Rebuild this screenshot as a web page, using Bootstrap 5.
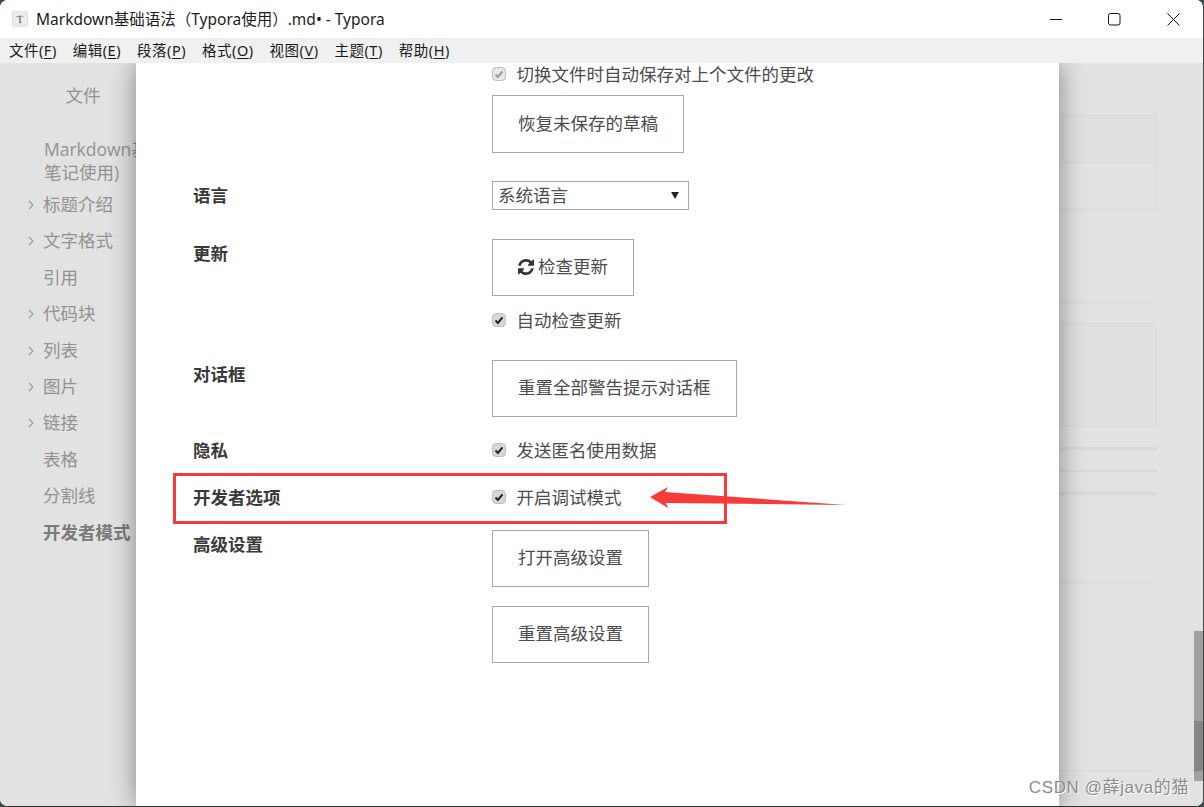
<!DOCTYPE html>
<html lang="zh">
<head>
<meta charset="utf-8">
<title>Typora</title>
<link href="https://cdn.jsdelivr.net/npm/bootstrap@5.3.0/dist/css/bootstrap.min.css" rel="stylesheet">
<style>
html,body{height:807px;overflow:hidden;background:#3c4a4e;}
body{font-family:"Open Sans","Noto Sans CJK SC",sans-serif;}
.win{width:1204px;height:807px;background:#fff;border-radius:8px;overflow:hidden;border-right:1px solid #444;border-bottom:1px solid #333;position:relative;}
.titlebar{height:38px;background:#fff;color:#1c1c1c;font-size:15.5px;font-family:"Noto Sans","Noto Sans CJK SC",sans-serif;padding-left:12px;}
.titletext{padding-top:1px;margin-left:-1px;}
.appicon{width:16px;height:16px;background:#ececec;border:1px solid #e0e0e0;border-radius:2px;font:11px/14px "Liberation Serif",serif;color:#555;text-align:center;margin-right:9px;transform:rotate(-3deg);flex:none;}
.winctl{margin-left:auto;gap:46px;padding-right:23px;}
.winctl svg{display:block;}
.menubar{height:25px;background:#f0f0f0;font-size:14.5px;letter-spacing:.5px;color:#1a1a1a;padding-left:9px;gap:16px;line-height:25px;font-family:"Noto Sans","Noto Sans CJK SC",sans-serif;}
.menubar u{text-underline-offset:2px;}
.workspace{height:743px;background:#e2e2e2;overflow:hidden;position:relative;}
.side{width:136px;flex:none;color:#929292;font-size:17.5px;white-space:nowrap;overflow:hidden;}
.side-title{width:136px;padding-left:30px;text-align:center;height:24px;line-height:24px;margin-top:20px;}
.side-item{height:36.4px;line-height:36.4px;padding-left:43px;position:relative;}
.side-item.wrap{height:auto;line-height:23px;padding-left:44px;margin-top:31px;padding-bottom:2px;}
.side-item svg{position:absolute;left:28px;top:14px;}
.side-item.on{font-weight:700;color:#7a7a7a;}
.dialog{width:923px;flex:none;background:#fff;box-shadow:0 0 24px rgba(0,0,0,.42);position:relative;z-index:2;color:#4d4d4d;font-size:17.5px;padding-left:57px;}
.setrow{display:flex;}
.setlabel{width:299px;flex:none;font-weight:700;color:#3a3a3a;line-height:24px;}
.setbody{flex:1;}
.plainbtn{display:block;background:#fff;border:1px solid #a8a8a8;border-radius:0;color:#4d4d4d;font-size:17.5px;height:58px;padding:0 25px 3px;line-height:24px;}
.plainbtn svg{vertical-align:-2px;margin-right:4px;}
.chk{display:flex;align-items:center;height:24px;line-height:24px;margin:0;}
.chk input{width:14px;height:14px;margin:0 10.5px 0 0;border:1px solid #bbb;border-radius:2px;flex:none;background-size:12px;opacity:1;}
.chk input:checked{background-color:#d8d8d8;border-color:#bbb;background-image:url("data:image/svg+xml,%3Csvg xmlns='http://www.w3.org/2000/svg' viewBox='0 0 12 12'%3E%3Cpath d='M2.5 6.5l2.4 2.4 4.6-5.6' fill='none' stroke='%23222' stroke-width='2'/%3E%3C/svg%3E");}
.chk input:disabled{opacity:1;}
.chk.off input:checked{background-color:#e8e8e8;background-image:url("data:image/svg+xml,%3Csvg xmlns='http://www.w3.org/2000/svg' viewBox='0 0 12 12'%3E%3Cpath d='M2.5 6.5l2.4 2.4 4.6-5.6' fill='none' stroke='%23999' stroke-width='2'/%3E%3C/svg%3E");}
.chk label{color:#4d4d4d;}
.langsel{width:197px;height:29px;border:1px solid #a8a8a8;border-radius:0;color:#4d4d4d;font-size:17.5px;padding:0 5px;line-height:27px;background-position:right 9px center;background-size:8px 7px;background-image:url("data:image/svg+xml,%3Csvg xmlns='http://www.w3.org/2000/svg' viewBox='0 0 9 8'%3E%3Cpath d='M0 0h9L4.5 8z' fill='%23222'/%3E%3C/svg%3E");}
.rest{flex:1;padding-right:46px;}
.ghost-table{margin-top:52px;border:1px solid #d9d9d9;border-left:0;height:95px;}
.ghost-head{height:47px;background:#e0e0e0;border-bottom:1px solid #d9d9d9;}
.ghost-line{background:#d9d9d9;}
.ghost-block{height:104px;background:#e0e0e0;border:1px solid #dadada;border-left:0;border-radius:0 4px 4px 0;margin-top:20px;}
.scroller{position:absolute;right:0;top:568px;width:9px;height:150px;background:#a0a0a0;z-index:1;}
.scroller i{display:block;height:50px;margin-top:90px;background:#858585;}
.redbox{position:absolute;left:173px;top:410px;width:554px;height:51px;border:3px solid #f63b3b;z-index:3;pointer-events:none;}
.arrowmark{position:absolute;left:648px;top:422px;z-index:3;}
.wm{position:absolute;right:14px;bottom:8px;z-index:4;color:#8c8c8c;font:17px/20px "Liberation Sans","Noto Sans CJK SC",sans-serif;letter-spacing:.6px;text-shadow:1px 1px 0 #fff;}
</style>
</head>
<body>
<div class="win d-flex flex-column">
  <div class="titlebar d-flex align-items-center">
    <div class="appicon">T</div>
    <span class="titletext">Markdown基础语法（Typora使用）.md• - Typora</span>
    <div class="winctl d-flex align-items-center">
      <svg width="13" height="13" viewBox="0 0 13 13"><path d="M1 6.5h12" stroke="#111" stroke-width="1"/></svg>
      <svg width="13" height="13" viewBox="0 0 13 13"><rect x=".5" y=".5" width="11.5" height="11.5" rx="2" fill="none" stroke="#111"/></svg>
      <svg width="13" height="13" viewBox="0 0 13 13"><path d="M.5.5l12 12M12.5.5l-12 12" stroke="#111" stroke-width="1"/></svg>
    </div>
  </div>
  <div class="menubar d-flex">
    <span>文件(<u>F</u>)</span><span>编辑(<u>E</u>)</span><span>段落(<u>P</u>)</span><span>格式(<u>O</u>)</span><span>视图(<u>V</u>)</span><span>主题(<u>T</u>)</span><span>帮助(<u>H</u>)</span>
  </div>
  <div class="workspace d-flex">
    <div class="side">
      <div class="side-title"><span>文件</span></div>
      <div class="side-item wrap">Markdown基<br>笔记使用)</div>
      <div class="side-item"><svg width="7" height="10" viewBox="0 0 7 10"><path d="M1 1l4 4-4 4" fill="none" stroke="#999" stroke-width="1.1"/></svg>标题介绍</div>
      <div class="side-item"><svg width="7" height="10" viewBox="0 0 7 10"><path d="M1 1l4 4-4 4" fill="none" stroke="#999" stroke-width="1.1"/></svg>文字格式</div>
      <div class="side-item">引用</div>
      <div class="side-item"><svg width="7" height="10" viewBox="0 0 7 10"><path d="M1 1l4 4-4 4" fill="none" stroke="#999" stroke-width="1.1"/></svg>代码块</div>
      <div class="side-item"><svg width="7" height="10" viewBox="0 0 7 10"><path d="M1 1l4 4-4 4" fill="none" stroke="#999" stroke-width="1.1"/></svg>列表</div>
      <div class="side-item"><svg width="7" height="10" viewBox="0 0 7 10"><path d="M1 1l4 4-4 4" fill="none" stroke="#999" stroke-width="1.1"/></svg>图片</div>
      <div class="side-item"><svg width="7" height="10" viewBox="0 0 7 10"><path d="M1 1l4 4-4 4" fill="none" stroke="#999" stroke-width="1.1"/></svg>链接</div>
      <div class="side-item">表格</div>
      <div class="side-item">分割线</div>
      <div class="side-item on">开发者模式</div>
    </div>
    <div class="dialog">
      <div class="setrow">
        <div class="setlabel"></div>
        <div class="setbody">
          <div class="chk off" style="margin-top:-1px"><input class="form-check-input" type="checkbox" checked disabled><label>切换文件时自动保存对上个文件的更改</label></div>
          <button class="btn plainbtn" type="button" style="margin-top:9px">恢复未保存的草稿</button>
        </div>
      </div>
      <div class="setrow" style="margin-top:28px">
        <div class="setlabel" style="padding-top:2px">语言</div>
        <div class="setbody"><select class="form-select langsel"><option>系统语言</option></select></div>
      </div>
      <div class="setrow" style="margin-top:29px">
        <div class="setlabel" style="padding-top:2px">更新</div>
        <div class="setbody">
          <button class="btn plainbtn" type="button" style="height:57px"><svg width="16" height="16" viewBox="0 0 1536 1536"><path fill="#333" d="M1511 928q0 5-1 7-64 268-268 434.5t-478 166.5q-146 0-282.5-55t-243.5-157l-129 129q-19 19-45 19t-45-19-19-45v-448q0-26 19-45t45-19h448q26 0 45 19t19 45-19 45l-137 137q71 66 161 102t187 36q134 0 250-65t186-179q11-17 53-117 8-23 30-23h192q13 0 22.5 9.5t9.5 22.5zm25-800v448q0 26-19 45t-45 19h-448q-26 0-45-19t-19-45 19-45l138-138q-148-137-349-137-134 0-250 65t-186 179q-11 17-53 117-8 23-30 23h-199q-13 0-22.5-9.5t-9.5-22.5v-7q65-268 270-434.5t480-166.5q146 0 284 55.5t245 156.5l130-129q19-19 45-19t45 19 19 45z"/></svg>检查更新</button>
          <div class="chk" style="margin-top:12px"><input class="form-check-input" type="checkbox" checked><label>自动检查更新</label></div>
        </div>
      </div>
      <div class="setrow" style="margin-top:28px">
        <div class="setlabel" style="margin-top:2px">对话框</div>
        <div class="setbody"><button class="btn plainbtn" type="button" style="height:57px">重置全部警告提示对话框</button></div>
      </div>
      <div class="setrow" style="margin-top:21px">
        <div class="setlabel">隐私</div>
        <div class="setbody"><div class="chk"><input class="form-check-input" type="checkbox" checked><label>发送匿名使用数据</label></div></div>
      </div>
      <div class="setrow" style="margin-top:23px">
        <div class="setlabel">开发者选项</div>
        <div class="setbody"><div class="chk"><input class="form-check-input" type="checkbox" checked><label>开启调试模式</label></div></div>
      </div>
      <div class="setrow" style="margin-top:21px">
        <div class="setlabel" style="margin-top:2px">高级设置</div>
        <div class="setbody">
          <button class="btn plainbtn" type="button" style="height:57px">打开高级设置</button>
          <button class="btn plainbtn" type="button" style="height:57px;margin-top:19px">重置高级设置</button>
        </div>
      </div>
    </div>
    <div class="rest">
      <div class="ghost-table"><div class="ghost-head"></div></div>
      <div class="ghost-line" style="height:1px;margin-top:92px"></div>
      <div class="ghost-block"></div>
      <div class="ghost-line" style="height:3px;margin-top:20px"></div>
      <div class="ghost-line" style="height:2px;margin-top:20px"></div>
      <div class="ghost-line" style="height:3px;margin-top:20px"></div>
      <div class="ghost-line" style="height:1px;margin-top:87px"></div>
      <div class="ghost-line" style="height:1px;margin-top:187px"></div>
    </div>
    <div class="scroller"><i></i></div>
    <div class="redbox"></div>
    <svg class="arrowmark" width="200" height="24" viewBox="0 0 200 24"><path d="M2 12 L20 2 L17 7 L198 20 L18 18 L20 23 Z" fill="#f63b3b"/></svg>
    <div class="wm">CSDN @薛java的猫</div>
  </div>
</div>
<script src="https://cdn.jsdelivr.net/npm/bootstrap@5.3.0/dist/js/bootstrap.bundle.min.js"></script>
</body>
</html>
